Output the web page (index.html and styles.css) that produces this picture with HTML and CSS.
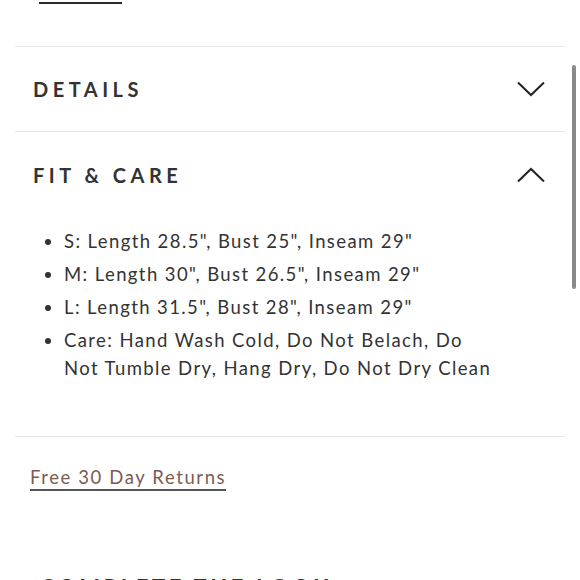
FILE: index.html
```html
<!DOCTYPE html>
<html lang="en">
<head>
<meta charset="utf-8">
<link rel="stylesheet" href="styles.css">
<title>Fit &amp; Care</title>
</head>
<body>
<div class="page">
  <div class="tabline"></div>
  <section class="acc">
    <div class="acc-head">
      <h2 class="acc-title">DETAILS</h2>
      <svg class="chev" width="28" height="16" viewBox="0 0 28 16"><polyline points="1,1.5 14,14 27,1.5" fill="none" stroke="#222" stroke-width="2"/></svg>
    </div>
  </section>
  <section class="acc open">
    <div class="acc-head">
      <h2 class="acc-title">FIT &amp; CARE</h2>
      <svg class="chev" width="28" height="16" viewBox="0 0 28 16"><polyline points="1,14.5 14,2 27,14.5" fill="none" stroke="#222" stroke-width="2"/></svg>
    </div>
    <ul class="acc-list">
      <li>S: Length 28.5", Bust 25", Inseam 29"</li>
      <li>M: Length 30", Bust 26.5", Inseam 29"</li>
      <li>L: Length 31.5", Bust 28", Inseam 29"</li>
      <li>Care: Hand Wash Cold, Do Not Belach, Do Not Tumble Dry, Hang Dry, Do Not Dry Clean</li>
    </ul>
  </section>
  <div class="returns"><a class="returns-link" href="#">Free 30 Day Returns</a></div>
  <h2 class="look">COMPLETE THE LOOK</h2>
</div>
<div class="scrollbar"></div>
</body>
</html>
```
FILE: styles.css
```css
html, body {
  margin: 0;
  padding: 0;
  background: #fff;
  overflow: hidden;
  height: 580px;
}
body {
  font-family: Lato, "Open Sans", sans-serif;
  color: #333;
  position: relative;
}
.page {
  padding: 0 15px;
}
.tabline {
  margin: 2px 0 0 24px;
  width: 83px;
  height: 2px;
  background: #2a2a2a;
}
.acc {
  border-top: 1px solid #e6e6e6;
}
.acc:first-of-type {
  margin-top: 42px;
}
.acc-head {
  display: flex;
  align-items: center;
  justify-content: space-between;
  height: 84px;
  padding: 0 20px 0 18px;
}
.open .acc-head {
  height: 86px;
}
.acc-title {
  margin: 0;
  font-size: 20px;
  font-weight: 700;
  letter-spacing: 4.5px;
  color: #333;
}
.chev {
  display: block;
}
.acc-list {
  margin: 9px 0 0;
  padding: 0 62px 54px 49px;
  font-size: 18.5px;
  line-height: 28px;
  letter-spacing: 1.4px;
  color: #333;
}
.acc-list li {
  margin-bottom: 5px;
}
.acc-list li:last-child {
  margin-bottom: 0;
}
.returns {
  border-top: 1px solid #e6e6e6;
  padding: 28px 15px 0;
}
.returns-link {
  display: inline-block;
  font-size: 18.5px;
  line-height: 24px;
  letter-spacing: 1.6px;
  color: #7b5d50;
  text-decoration: none;
  border-bottom: 2px solid #555;
}
.look {
  margin: 83px 0 0 25px;
  font-size: 22px;
  font-weight: 700;
  letter-spacing: 3.6px;
  color: #333;
}
.scrollbar {
  position: absolute;
  top: 65px;
  left: 572px;
  width: 4px;
  height: 224px;
  background: #8a8a8a;
  border-radius: 2px;
}
```
